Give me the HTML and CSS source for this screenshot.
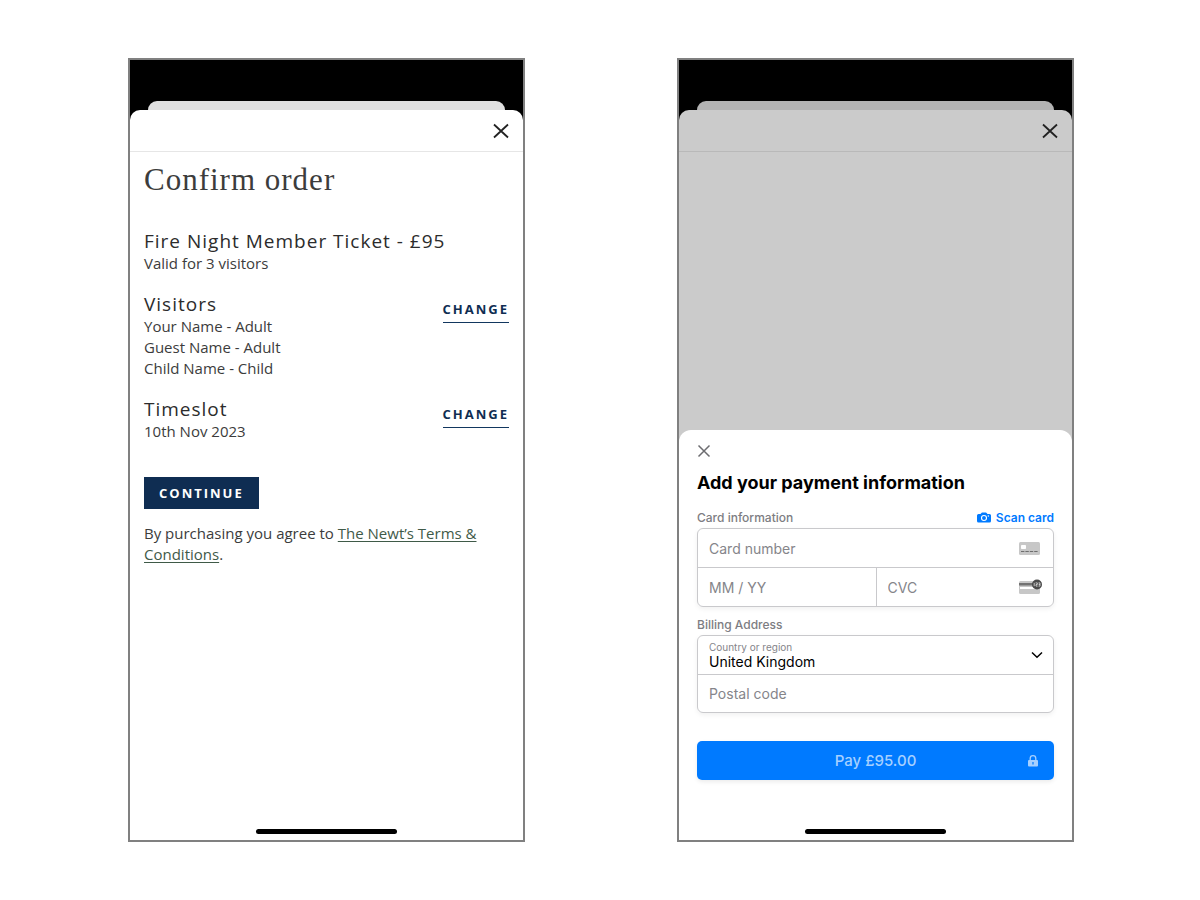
FILE: index.html
```html
<!DOCTYPE html>
<html lang="en">

<head>
    <meta charset="UTF-8">
    <meta name="viewport" content="width=device-width, initial-scale=1.0">
    <title>Confirm order</title>
    <link rel="stylesheet" href="styles.css">
</head>

<body>
    <main class="screens">
        <section class="phone">
            <div class="back-sheet"></div>
            <div class="sheet">
                <header class="sheet-header">
                    <button class="close" type="button" aria-label="Close">
                        <svg width="16" height="16" viewBox="0 0 16 16"><path d="M1 1.5 15 14.5M15 1.5 1 14.5" /></svg>
                    </button>
                </header>
                <div class="order">
                    <h1>Confirm order</h1>
                    <div class="order-row">
                        <div>
                            <h2>Fire Night Member Ticket - £95</h2>
                            <p>Valid for 3 visitors</p>
                        </div>
                    </div>
                    <div class="order-row">
                        <div>
                            <h2>Visitors</h2>
                            <p>Your Name - Adult</p>
                            <p>Guest Name - Adult</p>
                            <p>Child Name - Child</p>
                        </div>
                        <button class="change" type="button">CHANGE</button>
                    </div>
                    <div class="order-row">
                        <div>
                            <h2>Timeslot</h2>
                            <p>10th Nov 2023</p>
                        </div>
                        <button class="change" type="button">CHANGE</button>
                    </div>
                    <button class="continue" type="button">CONTINUE</button>
                    <p>By purchasing you agree to <a href="#">The Newt’s Terms &amp; Conditions</a>.</p>
                </div>
                <div class="home-bar"></div>
            </div>
        </section>

        <section class="phone dimmed">
            <div class="back-sheet"></div>
            <div class="sheet">
                <header class="sheet-header">
                    <button class="close" type="button" aria-label="Close">
                        <svg width="16" height="16" viewBox="0 0 16 16"><path d="M1 1.5 15 14.5M15 1.5 1 14.5" /></svg>
                    </button>
                </header>
                <form class="payment">
                    <button class="close-small" type="button" aria-label="Close">
                        <svg width="14" height="14" viewBox="0 0 14 14"><path d="M1.5 1.5 12.5 12.5M12.5 1.5 1.5 12.5" /></svg>
                    </button>
                    <h2>Add your payment information</h2>

                    <div class="group-title">
                        <span>Card information</span>
                        <button class="scan" type="button">
                            <svg width="14" height="12" viewBox="0 0 14 12">
                                <path fill="#007aff" d="M1.5 2H3.5L4.6.8Q4.9.5 5.3.5H8.7Q9.1.5 9.4.8L10.5 2H12.5Q14 2 14 3.5V9Q14 10.5 12.5 10.5H1.5Q0 10.5 0 9V3.5Q0 2 1.5 2Z" />
                                <circle cx="7" cy="6" r="2.5" fill="none" stroke="#fff" stroke-width="1.1" />
                                <circle cx="11.3" cy="4" r=".7" fill="#fff" />
                            </svg>
                            Scan card
                        </button>
                    </div>
                    <div class="fields">
                        <div class="field">
                            <input type="text" placeholder="Card number" aria-label="Card number">
                            <svg width="24" height="16" viewBox="0 0 24 16">
                                <rect y="2" width="21" height="13" rx="1.5" fill="#c7c7c7" />
                                <rect x="2" y="5" width="5" height="4" rx=".8" fill="#fff" />
                                <path d="M2 11.5H19" stroke="#6e6e6e" stroke-width="1" stroke-dasharray="3.4 1" />
                            </svg>
                        </div>
                        <div class="split">
                            <div class="field">
                                <input type="text" placeholder="MM / YY" aria-label="Expiry date">
                            </div>
                            <div class="field">
                                <input type="text" placeholder="CVC" aria-label="CVC">
                                <svg width="24" height="16" viewBox="0 0 24 16">
                                    <rect y="2" width="21" height="13" rx="1.5" fill="#c7c7c7" />
                                    <path fill="#727272" d="M0 4H21V6.5H0Z" />
                                    <path fill="#fff" d="M1 8H16V10H1Z" />
                                    <circle cx="18" cy="5.5" r="5" fill="#4a4a4a" />
                                    <path d="M15.2 3.8V7.2M16.6 3.9H18.3V5.5H17V7.1H18.6M19.5 3.9H21V7.1H19.5M19.7 5.5H21" fill="none" stroke="#e4e4e4" stroke-width=".8" />
                                </svg>
                            </div>
                        </div>
                    </div>

                    <div class="group-title">
                        <span>Billing Address</span>
                    </div>
                    <div class="fields">
                        <div class="field country">
                            <div class="country-value">
                                <label for="country">Country or region</label>
                                <select id="country">
                                    <option>United Kingdom</option>
                                </select>
                            </div>
                            <svg width="12" height="8" viewBox="0 0 12 8"><path d="M1 1.5 6 6.2 11 1.5" fill="none" stroke="#000" stroke-width="1.5" /></svg>
                        </div>
                        <div class="field">
                            <input type="text" placeholder="Postal code" aria-label="Postal code">
                        </div>
                    </div>

                    <button class="pay" type="button">
                        <span>Pay £95.00</span>
                        <svg width="10" height="12" viewBox="0 0 10 12">
                            <path d="M2.2 5.5V3.5A2.8 2.8 0 0 1 7.8 3.5V5.5" fill="none" stroke="#a6d0ff" stroke-width="1.3" />
                            <rect y="5" width="10" height="6.5" rx="1" fill="#a6d0ff" />
                            <path d="M5 7V9.5" stroke="#007aff" stroke-width="1.2" />
                        </svg>
                    </button>
                    <div class="home-bar"></div>
                </form>
            </div>
        </section>
    </main>
</body>

</html>
```
FILE: styles.css
```css
* {
    margin: 0;
    padding: 0;
    box-sizing: border-box;
}

body {
    background-color: #fff;
    font-family: "Open Sans", sans-serif;
}

button {
    border: 0;
    background: none;
    font-family: inherit;
    cursor: pointer;
}

svg {
    display: block;
    flex: none;
}

.screens {
    display: grid;
    grid-template-columns: repeat(2, minmax(0, 1fr));
    gap: 152px;
    padding: 58px 126px 58px 128px;
}

.phone {
    display: flex;
    flex-direction: column;
    min-height: calc(100vh - 116px);
    padding-top: 41px;
    border: 2px solid #808080;
    background-color: #000;
}

.back-sheet {
    height: 9px;
    margin: 0 18px;
    border-radius: 9px 9px 0 0;
    background-color: #e0e0e0;
}

.sheet {
    flex: 1;
    display: flex;
    flex-direction: column;
    border-radius: 10px 10px 0 0;
    background-color: #fff;
}

.dimmed .back-sheet {
    background-color: #b3b3b3;
}

.dimmed .sheet {
    background-color: #cbcbcb;
}

.sheet-header {
    display: flex;
    justify-content: flex-end;
    align-items: center;
    height: 42px;
    padding-right: 14px;
    border-bottom: 1px solid #e6e6e6;
}

.dimmed .sheet-header {
    border-color: #b9b9b9;
}

.close path {
    stroke: #222;
    stroke-width: 1.8;
}

/* Order summary */
.order {
    padding: 10px 14px;
    color: #3c3c3c;
}

.order h1 {
    margin-bottom: 31px;
    font-family: "Liberation Serif", serif;
    font-size: 31px;
    font-weight: 400;
    line-height: 36px;
    letter-spacing: 1px;
}

.order h2 {
    font-size: 19px;
    font-weight: 500;
    line-height: 24px;
    letter-spacing: 1px;
    color: #2c2c2c;
}

.order p {
    font-size: 15px;
    line-height: 21px;
}

.order a {
    color: #3f5a48;
    text-underline-offset: 2px;
}

.order-row {
    display: flex;
    justify-content: space-between;
    align-items: flex-start;
    margin-bottom: 18px;
}

.change {
    margin-top: 8px;
    padding-bottom: 4px;
    border-bottom: 1px solid #12375f;
    font-size: 13px;
    font-weight: 700;
    line-height: 18px;
    letter-spacing: 2px;
    color: #0f2d52;
}

.continue {
    margin: 17px 0 14px;
    padding: 0 15px;
    background-color: #0f2d52;
    font-size: 13px;
    font-weight: 700;
    line-height: 32px;
    letter-spacing: 2px;
    color: #fff;
}

.home-bar {
    width: 141px;
    height: 5px;
    margin: auto auto 6px;
    border-radius: 3px;
    background-color: #000;
}

/* Payment form */
.payment {
    display: flex;
    flex-direction: column;
    min-height: 410px;
    margin-top: auto;
    padding: 14px 18px 0;
    border-radius: 12px 12px 0 0;
    background-color: #fff;
    font-family: Inter, sans-serif;
}

.close-small {
    align-self: flex-start;
}

.close-small path {
    stroke: #6c6c70;
    stroke-width: 1.5;
}

.payment h2 {
    margin: 13px 0 15px;
    font-size: 18px;
    font-weight: 700;
    line-height: 24px;
}

.group-title {
    display: flex;
    justify-content: space-between;
    margin-bottom: 2px;
    font-size: 12px;
    font-weight: 500;
    line-height: 16px;
    color: #7d7d82;
}

.scan {
    display: flex;
    align-items: center;
    gap: 5px;
    font-size: 12px;
    font-weight: 600;
    line-height: 16px;
    color: #007aff;
}

.fields {
    margin-bottom: 10px;
    border: 1px solid #c9c9cc;
    border-radius: 6px;
    box-shadow: 0 2px 5px rgba(0, 0, 0, 0.06);
}

.field {
    display: flex;
    align-items: center;
    height: 38px;
    padding: 0 10px 0 11px;
}

.field + .field,
.split {
    border-top: 1px solid #c9c9cc;
}

.split {
    display: grid;
    grid-template-columns: repeat(2, minmax(0, 1fr));
}

.split .field + .field {
    border-top: 0;
    border-left: 1px solid #c9c9cc;
}

.field input {
    flex: 1;
    min-width: 0;
    border: 0;
    outline: 0;
    background: none;
    font-family: inherit;
    font-size: 14px;
}

.field input::placeholder {
    color: #85858a;
}

.country-value {
    flex: 1;
    display: flex;
    flex-direction: column;
}

.country label {
    font-size: 10px;
    line-height: 14px;
    color: #85858a;
}

.country select {
    appearance: none;
    border: 0;
    background: none;
    font-family: inherit;
    font-size: 14px;
    line-height: 16px;
    color: #000;
}

.pay {
    display: grid;
    grid-template-columns: 1fr auto 1fr;
    align-items: center;
    height: 39px;
    margin-top: 18px;
    padding: 0 16px;
    border-radius: 5px;
    background-color: #007aff;
    box-shadow: 0 2px 4px rgba(0, 0, 0, 0.08);
    font-size: 15px;
    font-weight: 500;
    color: #a6d0ff;
}

.pay span {
    grid-column: 2;
}

.pay svg {
    justify-self: end;
}

@media (max-width: 1000px) {
    .screens {
        grid-template-columns: minmax(0, 1fr);
        gap: 40px;
        padding: 40px 20px;
    }
}
```
